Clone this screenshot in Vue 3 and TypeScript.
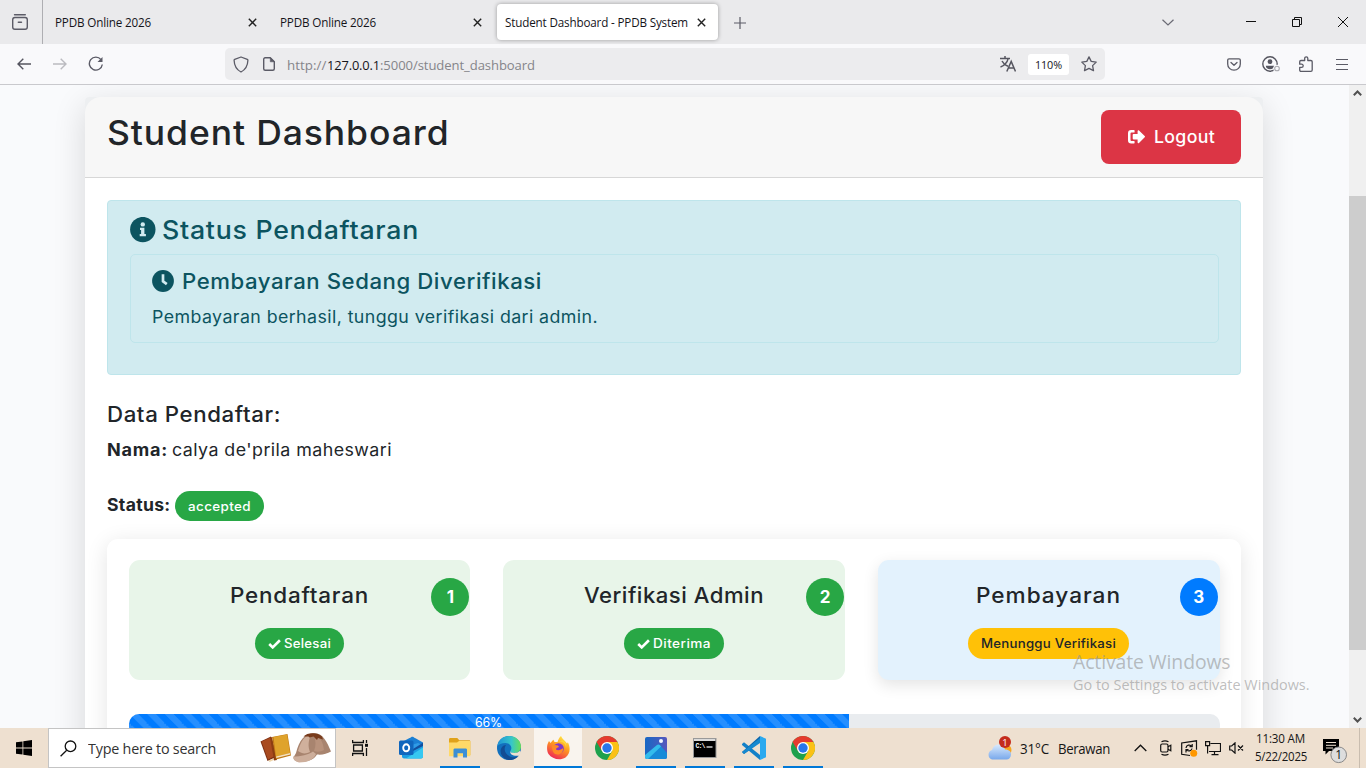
<script setup lang="ts">
import type { Directive } from 'vue'

// Fits a label to the given width in pixels, half by tracking and half by stretching.
const vFit: Directive<HTMLElement, number> = {
  mounted(el, { value }) {
    el.style.display = 'inline-block'
    const count = (el.textContent ?? '').length
    const natural = el.getBoundingClientRect().width
    if (!natural || !count) return
    const tracked = (natural + value) / 2
    el.style.letterSpacing = `${(tracked - natural) / count}px`
    el.style.width = `${value}px`
    el.style.transformOrigin = '0 50%'
    el.style.transform = `scaleX(${value / tracked})`
  },
}

interface Step {
  title: string
  titleWidth: number
  label: string
  labelWidth: number
  kind: string
  check: boolean
}

const steps: Step[] = [
  { title: 'Pendaftaran', titleWidth: 139, label: 'Selesai', labelWidth: 47, kind: 'done', check: true },
  { title: 'Verifikasi Admin', titleWidth: 180, label: 'Diterima', labelWidth: 58, kind: 'done', check: true },
  { title: 'Pembayaran', titleWidth: 145, label: 'Menunggu Verifikasi', labelWidth: 135, kind: 'current', check: false },
]
const progress = 66

const apps = [
  { id: 'outlook', state: '' },
  { id: 'explorer', state: 'open' },
  { id: 'edge', state: '' },
  { id: 'firefox', state: 'active' },
  { id: 'chrome', state: '' },
  { id: 'photos', state: 'open' },
  { id: 'cmd', state: 'open' },
  { id: 'vscode', state: 'open' },
  { id: 'chrome', state: 'open' },
]
</script>

<template>
  <div class="screen">
    <div class="tabbar">
      <div class="recent">
        <svg width="18" height="18" viewBox="0 0 18 18" fill="none" stroke="#5b5b66" stroke-width="1.4" stroke-linecap="round">
          <path d="M3.5 1.7h10.8" /><rect x="1.7" y="4.5" width="14.6" height="11.8" rx="2.2" /><path d="M7.3 9.3h3.2" />
        </svg>
      </div>
      <div class="tab first">
        <span v-fit="96">PPDB Online 2026</span>
        <svg class="x" width="9" height="9" viewBox="0 0 9 9"><path d="M.8.8l7.4 7.4M8.2.8L.8 8.2" /></svg>
      </div>
      <div class="tab second">
        <span v-fit="96">PPDB Online 2026</span>
        <svg class="x" width="9" height="9" viewBox="0 0 9 9"><path d="M.8.8l7.4 7.4M8.2.8L.8 8.2" /></svg>
      </div>
      <div class="tab selected">
        <span v-fit="183">Student Dashboard - PPDB System</span>
        <svg class="x" width="9" height="9" viewBox="0 0 9 9"><path d="M.8.8l7.4 7.4M8.2.8L.8 8.2" /></svg>
      </div>
      <svg class="plus" width="12" height="12" viewBox="0 0 12 12"><path d="M6 0v12M0 6h12" stroke="#5b5b66" stroke-width="1.2" /></svg>
      <div class="window-controls">
        <svg width="12" height="7" viewBox="0 0 12 7" fill="none" stroke="#6a6a74" stroke-width="1.2"><path d="M.5.7L6 6 11.5.7" /></svg>
        <svg class="minimize" width="10" height="10" viewBox="0 0 10 10"><path d="M0 4.5h10" stroke="#111" /></svg>
        <svg class="restore" width="10" height="10" viewBox="0 0 10 10" fill="none" stroke="#111"><path d="M.5 2.5h7v7h-7zM2.5 2.5v-2h7v7h-2" /></svg>
        <svg class="close" width="10" height="10" viewBox="0 0 10 10" stroke="#111"><path d="M0 0l10 10M10 0L0 10" /></svg>
      </div>
    </div>

    <div class="toolbar">
      <svg class="back" width="14" height="12" viewBox="0 0 14 12" fill="none" stroke="#55555f" stroke-width="1.4"><path d="M14 6H1M6.3.7L1 6l5.3 5.3" /></svg>
      <svg class="forward" width="14" height="12" viewBox="0 0 14 12" fill="none" stroke="#bbbbc0" stroke-width="1.4"><path d="M0 6h13M7.7.7L13 6l-5.3 5.3" /></svg>
      <svg class="reload" width="16" height="16" viewBox="0 0 16 16" fill="none" stroke="#5b5b66" stroke-width="1.4"><path d="M13 3.6A6.5 6.5 0 1 0 14.3 8.5" /><path d="M14.5 1v5h-5z" fill="#5b5b66" stroke="none" /></svg>
      <div class="address">
        <svg width="16" height="17" viewBox="0 0 16 17" fill="none" stroke="#5b5b66" stroke-width="1.3" stroke-linejoin="round"><path d="M8 1l6.3 2.4c.5.2.6.5.6.9C14.7 10 12.4 13.8 8 16 3.6 13.8 1.3 10 1.1 4.3c0-.4.1-.7.6-.9z" /></svg>
        <svg class="file" width="12" height="14" viewBox="0 0 12 14" fill="none" stroke="#5b5b66" stroke-width="1.4" stroke-linejoin="round"><path d="M7.3.8H2.2C1.3.8.7 1.4.7 2.3v9.4c0 .9.6 1.5 1.5 1.5h7.6c.9 0 1.5-.6 1.5-1.5V4.8z" /><path d="M7.3.8v4h4z" fill="#5b5b66" stroke-width=".6" /></svg>
        <div class="url"><span v-fit="39.5">http://</span><b v-fit="53">127.0.0.1</b><span v-fit="155">:5000/student_dashboard</span></div>
        <svg class="translate" width="16" height="16" viewBox="0 0 16 16" fill="none" stroke="#55555f" stroke-width="1.5"><path d="M0 2.5h10M5 0v2.5M8 3C7.5 6 4 10 .5 11M2 5c1 2 4 4.5 6 5.3M6.8 15.5L11.2 5.5l4.3 10M8.3 12h5.8" /></svg>
        <div class="zoom"><span v-fit="27">110%</span></div>
        <svg class="star" width="16" height="16" viewBox="0 0 16 16" fill="none" stroke="#5b5b66" stroke-width="1.3" stroke-linejoin="round"><path d="M8 .9l2.2 4.5 5 .7-3.6 3.5.9 5L8 12.3l-4.5 2.3.9-5L.8 6.1l5-.7z" /></svg>
      </div>
      <svg class="pocket" width="14" height="13" viewBox="0 0 14 13" fill="none" stroke="#5b5b66" stroke-width="1.3" stroke-linecap="round" stroke-linejoin="round"><path d="M2 .8h10c.8 0 1.3.5 1.3 1.3v3.8c0 3.6-2.7 6.3-6.3 6.3S.7 9.5.7 5.9V2.1C.7 1.3 1.2.8 2 .8z" /><path d="M4 4.5l3 2.8 3-2.8" /></svg>
      <svg class="account" width="19" height="16" viewBox="0 0 19 16"><circle cx="8" cy="8" r="7.2" fill="none" stroke="#55555f" stroke-width="1.4" /><circle cx="8" cy="5.7" r="2.4" fill="#55555f" /><path d="M3.8 9.7h8.4c0 2-1.8 3.5-4.2 3.5S3.8 11.7 3.8 9.7z" fill="#55555f" /><circle cx="15" cy="12.5" r="3.8" fill="#f9f9fb" /><circle cx="15" cy="12.5" r="2.3" fill="none" stroke="#aaaab0" stroke-width="1.1" /></svg>
      <svg class="extensions" width="14" height="16" viewBox="0 0 14 16" fill="none" stroke="#5b5b66" stroke-width="1.3" stroke-linejoin="round"><path d="M2 4.5h3.7V2.3c0-.9.7-1.5 1.5-1.5s1.6.6 1.6 1.5v2.2h3c.8 0 1.4.5 1.4 1.3v8.2c0 .8-.5 1.3-1.3 1.3H2c-.8 0-1.3-.5-1.3-1.3v-2.7h1.9c.9 0 1.6-.7 1.6-1.6s-.7-1.5-1.6-1.5H.7V5.8c0-.8.5-1.3 1.3-1.3z" /></svg>
      <svg class="menu" width="12" height="11" viewBox="0 0 12 11" stroke="#5b5b66" stroke-width="1.2"><path d="M0 .5h12M0 5.5h12M0 10.5h12" /></svg>
    </div>

    <div class="viewport">
      <main class="card">
        <header class="card-header">
          <h1><span v-fit="342.5">Student Dashboard</span></h1>
          <button class="logout">
            <svg width="17" height="14" viewBox="0 0 17 14" fill="#fff"><path d="M6 0H3.2A3.2 3.2 0 0 0 0 3.2v7A3.2 3.2 0 0 0 3.2 13.4H6c.4 0 .6-.3.6-.7v-1.2c0-.4-.2-.6-.6-.6H3.4c-.5 0-.9-.4-.9-.9V3.4c0-.5.4-.9.9-.9H6c.4 0 .6-.3.6-.6V.7C6.6.3 6.4 0 6 0z" /><path d="M16.7 6.1L11 .5c-.5-.5-1.4-.1-1.4.6V4H5.5c-.5 0-.8.3-.8.8v3.8c0 .5.3.8.8.8h4.1v3c0 .7.9 1.1 1.4.6l5.700-5.700c.4-.3.4-.8 0-1.200z" /></svg>
            <span v-fit="61">Logout</span>
          </button>
        </header>
        <section class="card-body">
          <div class="alert">
            <h2>
              <svg width="26" height="26" viewBox="0 0 26 26"><circle cx="12.8" cy="12.6" r="12.7" fill="#0c5460" /><circle cx="12.8" cy="7.4" r="2.2" fill="#d1ebf0" /><path d="M10 10.7h4.4V17h1.5v2.3H9.7V17h1.4v-4H10z" fill="#d1ebf0" /></svg>
              <span v-fit="257">Status Pendaftaran</span>
            </h2>
            <div class="notice">
              <h3>
                <svg width="22" height="22" viewBox="0 0 22 22"><circle cx="11" cy="11" r="10.9" fill="#0c5460" /><path d="M11 4.3v7l3.8 2.8" fill="none" stroke="#d1ebf0" stroke-width="2.7" /></svg>
                <span v-fit="360">Pembayaran Sedang Diverifikasi</span>
              </h3>
              <p><span v-fit="446">Pembayaran berhasil, tunggu verifikasi dari admin.</span></p>
            </div>
          </div>
          <h3 class="data-title"><span v-fit="174">Data Pendaftar:</span></h3>
          <p class="name"><b v-fit="61">Nama:</b><span v-fit="220">calya de'prila maheswari</span></p>
          <div class="status"><b v-fit="63.5">Status:</b><span class="badge done"><span v-fit="63">accepted</span></span></div>

          <div class="tracker">
            <div class="steps">
              <div v-for="(step, i) in steps" :key="step.title" class="step" :class="step.kind">
                <h3><span v-fit="step.titleWidth">{{ step.title }}</span></h3>
                <span class="badge" :class="step.kind">
                  <svg v-if="step.check" width="13" height="10" viewBox="0 0 13 10"><path d="M1.2 5l3.5 3.4L11.9 1.3" fill="none" stroke="#fff" stroke-width="2.6" /></svg>
                  <span v-fit="step.labelWidth">{{ step.label }}</span>
                </span>
                <span class="number">{{ i + 1 }}</span>
              </div>
            </div>
            <div class="progress"><div class="bar" :style="{ width: progress + '%' }"><span v-fit="27">{{ progress }}%</span></div></div>
          </div>
        </section>
      </main>
      <div class="scrollbar">
        <svg width="9" height="6" viewBox="0 0 9 6"><path d="M.8 5.2l3.7-3.7 3.7 3.7" /></svg>
        <div class="thumb"></div>
        <svg class="down" width="9" height="6" viewBox="0 0 9 6"><path d="M.8.8l3.7 3.7L8.2.8" /></svg>
      </div>
    </div>

    <div class="watermark">
      <div class="big"><span v-fit="157.5">Activate Windows</span></div>
      <div><span v-fit="236.5">Go to Settings to activate Windows.</span></div>
    </div>

    <footer class="taskbar">
      <div class="start"><svg width="16" height="16" viewBox="0 0 16 16"><path d="M0 2.3l6.5-.9v6.2H0zM7.3 1.3L16 0v7.6H7.3zM0 8.4h6.5v6.2L0 13.7zM7.3 8.4H16V16l-8.7-1.3z" /></svg></div>
      <div class="search">
        <svg width="17" height="17" viewBox="0 0 17 17" fill="none" stroke="#111" stroke-width="1.3"><circle cx="10.5" cy="6.3" r="5.3" /><path d="M6.7 10.2L.6 16.2" /></svg>
        <span v-fit="128">Type here to search</span>
        <svg class="art" width="72" height="32" viewBox="0 0 72 32">
          <path d="M.5 9.5L11 4.5l6 20-9.500 4.500z" fill="#7b2f13" /><path d="M1.500 9.500L11 5.500l5 18-8 4z" fill="#a94b20" />
          <path d="M8.500 28.500L15 26v1.500L9.500 30z" fill="#efd7ad" />
          <path d="M10 6l2-1 5 23-3 .5z" fill="#8c3d12" />
          <path d="M12 5l15.500-3L31 23.500 16 27.500z" fill="#c07a18" /><path d="M13.500 5L27 2.500l3 18.500-14 3.500z" fill="#dfa32c" /><path d="M16 24.500l14-3.500.4 1.500L16.300 26z" fill="#f5e3c0" />
          <path d="M36 21C39 8 45 1.500 54 1c9 0 13 9 17 18.500-4 2.500-9 3.500-14 3-3 5-9 8-20 7-3-1-4-3-3-5z" fill="#a8846f" />
          <path d="M38 19C41 9 45 3 51 3c-3 6-3 12-1 17-4 2-8 2-12-1z" fill="#d0b09c" /><path d="M54 4c7 0 9 7 10 14-3 2-7 2-10 1 2-5 2-10 0-15z" fill="#b8927c" />
          <path d="M33 24.500c8 0 15-1.500 20-5l3 2.500c-2 5-8 8.500-17 8.500-4-1-6-3-6-6z" fill="#cdae9b" />
          <path d="M43.500 4.500C47 0 58 0 62 4.500l1 3-5-1.500-1 2-3.500-3.500-4 1-1-1z" fill="#783b1c" />
        </svg>
      </div>
      <div class="taskview"><svg width="17" height="16" viewBox="0 0 17 16" fill="none" stroke="#111" stroke-width="1.3"><path d="M.6 0v2.5h10.800V0M1.600 5h8.800v6H1.600zM.6 16v-2.500h10.800V16M14.500 0v3M14.500 8v8" /><path d="M13 3.800h3v3h-3z" fill="#111" stroke="none" /></svg></div>
      <div class="apps">
        <div v-for="(app, i) in apps" :key="i" class="app" :class="app.state">
          <svg v-if="app.id === 'outlook'" width="24" height="24" viewBox="0 0 24 24">
            <path d="M3 8V6L12 1.200c1-.5 1.700-.5 2.700 0L24 6.500V12L12 17z" fill="#1a7fd4" /><path d="M14 8.500l5-1.500 5 2.500-10 6.500z" fill="#2f9be6" /><path d="M14 13L24 6.800v5L14 18z" fill="#134f9e" /><path d="M3 15h11l10-5v10.500c0 1-.8 2-2 2H5c-1 0-2-.8-2-2z" fill="#1b9de2" /><path d="M7 22.500L24 11.500v9c0 1-.8 2-2 2z" fill="#36c8f1" /><rect y="4.5" width="14.5" height="14.5" rx="1.5" fill="#1066bd" /><ellipse cx="7.2" cy="11.8" rx="3" ry="3.5" fill="none" stroke="#fff" stroke-width="1.9" />
          </svg>
          <svg v-else-if="app.id === 'explorer'" width="22" height="20" viewBox="0 0 22 20">
            <path d="M0 1.500C0 .7.5 0 1.300 0h7l2 2.200H20c.8 0 1.300.5 1.300 1.300V17H0z" fill="#e0a21a" /><path d="M0 4.500h8l2-1.500h11.300v15.200H0z" fill="#ffd968" /><path d="M4.500 19.500V12c0-1 .5-1.500 1.500-1.500h10.500c1 0 1.500.5 1.500 1.500v7.500h-4v-4.300H8.500v4.300z" fill="#3c8fd6" />
          </svg>
          <svg v-else-if="app.id === 'edge'" width="24" height="24" viewBox="0 0 24 24">
            <defs><linearGradient id="edgeTop" x1="0" x2="1"><stop stop-color="#1c92d7" /><stop offset=".6" stop-color="#37c6c9" /><stop offset="1" stop-color="#69df55" /></linearGradient></defs>
            <circle cx="12" cy="12" r="12" fill="#1270bd" /><path d="M.3 10C1.500 4 6 0 12 0c7 0 12 5 12 10.500 0 4-3 6.500-6.500 6.500-3 0-4.500-1-4-2.300.4-1 1-1.500.8-3.200C14 9 11.700 7 8.500 7 4.500 7 1.500 8.500.3 10z" fill="url(#edgeTop)" /><path d="M9 9c-3 4-1 10 5 12 3 .8 6 0 8-1.500C19 23.500 14 25 9.500 23.500 4 21 2 15 5 11c1-1.300 2.500-2 4-2z" fill="#124c94" /><path d="M13.500 14.700C13 16 14.500 17 17.500 17c2.200 0 4-.8 5.300-2.200l1.200 1.400-2 3.300c-5 1-10-1-8.500-4.800z" fill="#eee0d0" />
          </svg>
          <svg v-else-if="app.id === 'firefox'" width="24" height="24" viewBox="0 0 24 24">
            <defs><linearGradient id="fire" x1=".8" y1="0" x2=".3" y2="1"><stop stop-color="#fff04a" /><stop offset=".45" stop-color="#ff9a20" /><stop offset="1" stop-color="#ee2457" /></linearGradient></defs>
            <path d="M3 5l1.500 2C6 5 7 4 7.500 3.800L8.500 6h3c1-3 2-5 3.500-6 1 3 4 4.500 6 7.500.5-.2.8-.8.7-1.500C25 12 24 18 19.500 21.500 14 25 6 23 2.500 18 .5 14 .5 9 3 5z" fill="url(#fire)" /><circle cx="12.5" cy="12.5" r="5.3" fill="#8137c9" /><path d="M6 10c2-1.500 4-1 6-.5l1 1.500c-2 .5-3 1-3 2.500 2 1.500 5 .5 7-1.500.5 4-2 6.500-5.500 6.500S6 15 6 10z" fill="#ff8b25" /><path d="M12 6c5-1 8 2 8 6 1-4-.5-6-3-8z" fill="#ffd83b" />
          </svg>
          <svg v-else-if="app.id === 'chrome'" width="24" height="24" viewBox="0 0 24 24">
            <circle cx="12" cy="12" r="12" fill="#1ea14d" /><path d="M1.600 6A12 12 0 0 1 22.400 6L12 6.500 7 15z" fill="#e53b2e" /><path d="M12 6h10.400A12 12 0 0 1 12 24l5.200-9z" fill="#fbc116" /><circle cx="12" cy="12" r="6" fill="#fff" /><circle cx="12" cy="12" r="4.7" fill="#2876eb" />
          </svg>
          <svg v-else-if="app.id === 'photos'" width="22" height="22" viewBox="0 0 22 22">
            <defs><linearGradient id="photo" x2="1"><stop stop-color="#1768c4" /><stop offset="1" stop-color="#5657bd" /></linearGradient></defs>
            <rect width="22" height="22" rx="2" fill="url(#photo)" /><circle cx="16" cy="4" r="2" fill="#f3f6ff" /><path d="M2 21L12.500 8.500c.8-1 2-1 2.800 0L22 16v4c0 1.300-.7 2-2 2H2z" fill="#168bd8" /><path d="M0 18L12 8c.7-.7 2-.8 3 .2L16 9.400 3 22H2c-1.300 0-2-.7-2-2z" fill="#32bcec" />
          </svg>
          <svg v-else-if="app.id === 'cmd'" width="24" height="20" viewBox="0 0 24 20">
            <rect x=".5" y=".5" width="22.5" height="19" fill="#000" stroke="#999" /><path d="M1 1h21.500v2H1z" fill="#dadada" /><text x="2.5" y="9.5" fill="#fff" font-family="Liberation Mono, monospace" font-size="6.5" font-weight="700" textLength="10">C:\</text><path d="M13.500 9h6" stroke="#fff" stroke-width="1.2" />
          </svg>
          <svg v-else width="24" height="24" viewBox="0 0 24 24">
            <path d="M0 8l2-1.800L18 19v5L0 9z" fill="#1280c8" /><path d="M0 16L18 0v6L2 18 0 16z" fill="#0b65aa" /><path d="M18 0l6 2.800v18.400L18 24z" fill="#2aa9ef" /><path d="M0 16L18 2v5L2 18z" fill="#1689d0" />
          </svg>
        </div>
      </div>
      <div class="tray">
        <svg class="cloud" width="26" height="24" viewBox="0 0 26 24">
          <defs><linearGradient id="sky" y2="1" x2="0"><stop stop-color="#d9eafd" /><stop offset="1" stop-color="#78a8eb" /></linearGradient></defs>
          <circle cx="19" cy="14" r="5.5" fill="#f7a51f" /><path d="M5 23.500a5 5 0 0 1 0-9.500C6 10 9 8 12.500 8.500c3 .5 5 2.500 5.500 5 4 0 6.500 2.300 6 5.500-.3 2.500-2 4.500-4.500 4.500z" fill="url(#sky)" /><circle cx="18" cy="6" r="6" fill="#c42b1c" /><text x="18" y="9.5" text-anchor="middle" fill="#fff" font-family="Open Sans, sans-serif" font-size="9.5">1</text>
        </svg>
        <span class="temp" v-fit="29">31°C</span>
        <span class="weather" v-fit="52">Berawan</span>
        <svg class="up" width="13" height="8" viewBox="0 0 13 8" fill="none" stroke="#111" stroke-width="1.3"><path d="M.7 7l5.800-5.800L12.300 7" /></svg>
        <svg class="meet" width="12" height="16" viewBox="0 0 12 16" fill="none" stroke="#111" stroke-width="1.2"><rect x=".7" y="4" width="7.3" height="8" rx="1.5" /><path d="M8 6.800l2.800-1.500v5.400L8 9.200M1.500 1.800Q5 0 8.500 1.800M1.500 14.200Q5 16 8.500 14.200" /></svg>
        <svg class="update" width="17" height="17" viewBox="0 0 17 17" fill="none" stroke="#111" stroke-width="1.2"><path d="M9 15.500l-8.300-1.200V3L15.500.8v9" /><path d="M5 8c.2-3 4-4 6-1.500M11.200 4v2.700H8.500M11 8.500c-.5 2.500-4 3.500-6 1M5 12.500V9.500h2.500" /><circle cx="12.7" cy="13.2" r="3.5" fill="#ff9800" stroke="none" /></svg>
        <svg class="network" width="16" height="15" viewBox="0 0 16 15" fill="none" stroke="#111" stroke-width="1.2"><path d="M5.500 2.500h10v8H4M9.500 10.500v3M6.500 13.700h7M.6.6h4v4h-4zM2.600 4.600v8" /></svg>
        <svg class="sound" width="15" height="12" viewBox="0 0 15 12" fill="none" stroke="#111" stroke-width="1.2"><path d="M.7 4h2L6 .9v10.200L2.700 8h-2zM9 3.500l5 5M14 3.500l-5 5" /></svg>
        <div class="clock"><span v-fit="49">11:30 AM</span><span v-fit="52">5/22/2025</span></div>
        <svg class="notes" width="25" height="26" viewBox="0 0 25 26">
          <path d="M0 0h16v12H6l-3.500 3.500V12H0z" fill="#000" /><path d="M3 3.500h10M3 6.300h10M3 9h7" stroke="#eee0d0" /><circle cx="15.7" cy="15.8" r="7.8" fill="#ddd" stroke="#888" /><text x="15.7" y="20" text-anchor="middle" fill="#111" font-family="Open Sans, sans-serif" font-size="12">1</text>
        </svg>
        <i class="edge"></i>
      </div>
    </footer>
  </div>
</template>

<style>
body { margin: 0; overflow: hidden; }
</style>

<style scoped>
* { box-sizing: border-box; }
svg { display: block; flex: none; }
span, b { white-space: nowrap; text-align: left; }
h1, h2, h3, p { margin: 0; font-weight: 500; }
.screen { position: relative; width: 1366px; height: 768px; overflow: hidden; font-family: "Open Sans", "Noto Sans", sans-serif; font-size: 12px; color: #15141a; }
.tabbar { display: flex; align-items: center; height: 44px; background: #eaeaec; }
.recent { width: 43px; height: 44px; padding: 13px 0 0 11px; border-right: 1px solid #aeaeb2; }
.tab { display: flex; align-items: center; justify-content: space-between; height: 36px; line-height: 18px; }
.tab.first { width: 202px; margin-left: 12px; }
.tab.second { width: 202px; margin-left: 23px; }
.tab > span { padding-top: 2px; }
.tab.selected { width: 221px; margin-left: 15px; padding: 0 12px 0 8px; border-radius: 4px; background: #fff; box-shadow: 0 0 4px rgba(0, 0, 0, .35); }
.x { stroke: #222; stroke-width: 1.4; }
.plus { margin: 2px 0 0 16px; }
.window-controls { display: flex; align-items: center; margin-left: auto; padding-right: 18px; }
.minimize { margin-left: 72px; }
.restore { margin-left: 36px; }
.close { margin-left: 36px; }
.toolbar { display: flex; align-items: center; height: 41px; padding-left: 17px; background: #f9f9fb; border-bottom: 1px solid #c9c9cd; }
.forward { margin-left: 22px; }
.reload { margin-left: 21px; }
.address { display: flex; align-items: center; width: 880px; height: 32px; margin-left: 121px; padding: 0 8px; border-radius: 5px; background: #ececee; }
.file { margin-left: 14px; }
.url { display: flex; margin-left: 12px; font-size: 13.2px; line-height: 20px; color: #85858a; padding-top: 1px; }
.url b { font-weight: 400; color: #15141a; }
.translate { margin-left: auto; }
.zoom { width: 41px; height: 21px; margin: 0 12px; border-radius: 3px; background: #fff; font-size: 11px; line-height: 22px; text-align: center; }
.pocket { margin-left: 122px; }
.account { margin-left: 21px; }
.extensions { margin-left: 18px; }
.menu { margin-left: 23px; }
.viewport { position: relative; display: flex; justify-content: space-between; height: 643px; padding-left: 85px; overflow: hidden; background: #f9fafc; font-family: Inter, "Open Sans", sans-serif; font-optical-sizing: none; font-variation-settings: "opsz" 14; color: #212529; }
.card { width: 1178px; height: 760px; margin-top: 12px; border-radius: 4px; background: linear-gradient(#edeff1 30px, #fff 30px); box-shadow: 0 9px 33px rgba(0, 0, 0, .14); }
.card-header { display: flex; justify-content: space-between; height: 81px; padding: 13px 22px 0; border-bottom: 1px solid #d7d7d7; border-radius: 16px 16px 0 0; background: #f7f7f7; }
h1 { font-size: 34px; line-height: 46px; }
.logout { display: flex; align-items: center; width: 140px; height: 54px; padding: 0 0 1px 27px; gap: 9px; border: 0; border-radius: 8px; background: #dc3545; color: #fff; font: 500 17.2px Inter, sans-serif; }
.card-body { padding: 22px; }
.alert { height: 175px; padding: 13px 21px 0 22px; border: 1px solid #bee5eb; border-radius: 4px; background: #d1ebf0; color: #0c5460; }
h2 { display: flex; align-items: center; gap: 6px; font-size: 25.4px; line-height: 32px; }
h3 { font-size: 21.2px; line-height: 26px; }
.notice { height: 89px; margin-top: 8px; padding: 13px 21px 0; border: 1px solid #bee5eb; border-radius: 5px; }
.notice h3 { display: flex; align-items: center; gap: 8px; }
p, .status { font-size: 17px; font-weight: 400; line-height: 26px; }
.notice p { margin: 10px 0 0; }
.data-title { margin-top: 26px; }
.name { display: flex; gap: 3.5px; margin-top: 10px; }
.status { display: flex; gap: 4.5px; margin-top: 28px; }
.status b { line-height: 28px; }
.badge { display: inline-flex; align-items: center; gap: 3px; height: 31px; padding: 0 13px; border-radius: 16px; font-size: 12.8px; font-weight: 500; line-height: 31px; }
.status .badge { height: 30px; }
.badge.done { background: #28a745; color: #fff; }
.badge.current { background: #ffc107; }
.tracker { height: 230px; margin-top: 18px; padding: 21px 21.3px 0 21.7px; border-radius: 11px; background: #fff; box-shadow: 0 4px 22px rgba(0, 0, 0, .11); }
.steps { display: grid; grid-template-columns: repeat(3, 1fr); gap: 33px; }
.step { position: relative; height: 120px; padding-top: 22px; border-radius: 11px; text-align: center; }
.step.done { background: #e8f5e9; }
.step.current { background: #e3f2fd; box-shadow: 0 5px 16px rgba(0, 0, 0, .11); }
.step h3 { margin-bottom: 20px; }
.number { position: absolute; top: 18px; right: 1px; width: 38px; height: 38px; border-radius: 50%; background: #28a745; color: #fff; font-size: 17px; font-weight: 700; line-height: 38px; text-align: center; }
.current .number { background: #007bff; right: 2px; }
.progress { height: 22px; margin-top: 34px; overflow: hidden; border-radius: 10px; background: #e9ecef; }
.bar { height: 22px; background: linear-gradient(45deg, rgba(255, 255, 255, .15) 25%, transparent 25%, transparent 50%, rgba(255, 255, 255, .15) 50%, rgba(255, 255, 255, .15) 75%, transparent 75%) 0 0 / 17.6px 17.6px #007bff; color: #fff; font-size: 12.6px; line-height: 17px; text-align: center; }
.bar span { height: 14px; line-height: 17px; }
.scrollbar { display: flex; flex-direction: column; align-items: center; width: 17px; height: 643px; padding-top: 5px; background: #f0f0f0; }
.scrollbar path { fill: none; stroke: #505050; stroke-width: 2; }
.thumb { width: 17px; height: 454px; margin-top: 100px; background: #cdcdcd; }
.down { margin: auto 0 5px; }
.watermark { position: absolute; left: 1073px; top: 650px; color: rgba(150, 150, 150, .62); font-size: 14.4px; line-height: 20px; }
.watermark .big { font-size: 19.5px; line-height: 24px; }
.watermark div:last-child { margin-top: 1px; }
.taskbar { display: flex; height: 40px; background: #eee0d0; color: #161616; }
.start { width: 48px; padding: 12px 16px; }
.search { display: flex; align-items: center; width: 288px; padding: 0 3px 0 11px; border: 1px solid #c4c4c4; background: #fff; font-size: 14.8px; color: #333; }
.search > span { margin-left: 11px; }
.art { margin-left: auto; }
.taskview { width: 51px; padding: 12px 0 0 16px; }
.apps { display: flex; gap: 1px; }
.app { display: flex; align-items: center; justify-content: center; width: 48px; height: 40px; }
.app.open { background: linear-gradient(#0078d7, #0078d7) center bottom / 40px 2px no-repeat; }
.app.active { border-bottom: 2px solid #0078d7; padding-top: 2px; background: #f9f4ee; }
.tray { display: flex; align-items: center; flex: 1; margin-left: 160px; font-size: 13.8px; }
.temp { margin-left: 7px; }
.weather { margin-left: 9px; }
.up { margin-left: 24px; }
.meet { margin-left: 13px; }
.update { margin-left: 9px; }
.network { margin-left: 7px; }
.sound { margin-left: 8px; }
.clock { display: flex; flex-direction: column; align-items: center; width: 53px; margin-left: 10px; font-size: 12px; line-height: 18px; }
.notes { margin: 7px 0 0 16px; }
.edge { width: 1px; height: 40px; margin-left: 11px; background: #c9bdaf; }
</style>
